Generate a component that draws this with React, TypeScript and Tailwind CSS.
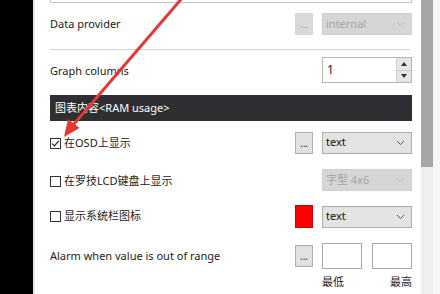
import React from 'react';

// Small building blocks for the settings panel
const DotsButton: React.FC<{ disabled?: boolean }> = ({ disabled }) => (
    <div
        className={
            'w-[18px] h-[22px] flex items-center justify-center text-[10px] leading-none border ' +
            (disabled ? 'bg-[#d9d9d9] border-[#d9d9d9] text-[#9a9a9a]' : 'bg-[#e1e1e1] border-[#adadad] text-[#222]')
        }
    >
        ...
    </div>
);

const Chevron: React.FC<{ color: string }> = ({ color }) => (
    <svg width="9" height="6" viewBox="0 0 9 6" fill="none">
        <path d="M1 1l3.5 3.5L8 1" stroke={color} strokeWidth="1" />
    </svg>
);

const Select: React.FC<{ value: string; disabled?: boolean }> = ({ value, disabled }) => (
    <div
        className={
            'w-[90px] h-[22px] flex items-center justify-between pl-[3px] pr-[6px] border ' +
            (disabled ? 'bg-[#d6d6d6] border-[#cfcfcf] text-[#a3a3a3]' : 'bg-[#e3e3e3] border-[#adadad] text-[#111]')
        }
    >
        <span>{value}</span>
        <Chevron color={disabled ? '#b5b5b5' : '#555'} />
    </div>
);

const CheckBox: React.FC<{ checked?: boolean }> = ({ checked }) => (
    <div className="w-[11px] h-[11px] border border-[#333] bg-white flex items-center justify-center">
        {checked && (
            <svg width="9" height="9" viewBox="0 0 9 9" fill="none">
                <path d="M1.2 4.6l2.2 2.2L7.8 1.8" stroke="#222" strokeWidth="1.2" />
            </svg>
        )}
    </div>
);

const App: React.FC = () => {
    return (
        <div
            className="relative w-[440px] h-[294px] overflow-hidden flex bg-white text-[11px] text-[#1b1b1b]"
            style={{ fontFamily: '"Noto Sans", "Noto Sans CJK SC", sans-serif' }}
        >
            {/* dark left edge */}
            <div className="w-[33px] bg-black" />
            <div className="w-[2px] bg-[#dde6ee]" />

            {/* panel */}
            <div className="flex-1 flex flex-col pl-[15px] pr-[9px]">
                <div className="h-[3px] border-l border-r border-b border-[#c4c4c4]" />

                {/* Data provider */}
                <div className="mt-[10px] h-[22px] flex items-center">
                    <span className="flex-1">Data provider</span>
                    <DotsButton disabled />
                    <div className="ml-[9px]">
                        <Select value="internal" disabled />
                    </div>
                </div>

                <div className="mt-[14px] mr-[2px] h-px bg-[#d2d2d2]" />

                {/* Graph columns */}
                <div className="mt-[7px] h-[26px] flex items-center">
                    <span className="flex-1 pt-[3px]">Graph columns</span>
                    <div className="w-[90px] h-[26px] flex border border-[#b4b4b4] bg-white">
                        <span className="flex-1 pl-[4px] pt-[3px] text-[12px]">1</span>
                        <div className="w-[15px] flex flex-col bg-[#e6e6e6] border-l border-[#d0d0d0]">
                            <div className="flex-1 flex items-center justify-center border-b border-[#c8c8c8]">
                                <svg width="6" height="4" viewBox="0 0 6 4"><path d="M0 4L3 0L6 4Z" fill="#333" /></svg>
                            </div>
                            <div className="flex-1 flex items-center justify-center">
                                <svg width="6" height="4" viewBox="0 0 6 4"><path d="M0 0L3 4L6 0Z" fill="#333" /></svg>
                            </div>
                        </div>
                    </div>
                </div>

                {/* section header */}
                <div className="mt-[12px] h-[26px] bg-[#2f2f33] text-white flex items-center pl-[5px]">
                    图表内容&lt;RAM usage&gt;
                </div>

                {/* OSD */}
                <div className="mt-[10px] h-[23px] flex items-center">
                    <div className="flex-1 flex items-center gap-[3px] pt-[2px]">
                        <CheckBox checked />
                        <span>在OSD上显示</span>
                    </div>
                    <DotsButton />
                    <div className="ml-[9px]">
                        <Select value="text" />
                    </div>
                </div>

                {/* Logitech LCD */}
                <div className="mt-[15px] h-[22px] flex items-center">
                    <div className="flex-1 flex items-center gap-[3px] pt-[2px]">
                        <CheckBox />
                        <span>在罗技LCD键盘上显示</span>
                    </div>
                    <Select value="字型 4x6" disabled />
                </div>

                {/* tray icon */}
                <div className="mt-[14px] h-[23px] flex items-center">
                    <div className="flex-1 flex items-center gap-[3px]">
                        <CheckBox />
                        <span>显示系统栏图标</span>
                    </div>
                    <div className="w-[18px] h-[23px] bg-[#ff0000] border border-[#c80000]" />
                    <div className="ml-[9px]">
                        <Select value="text" />
                    </div>
                </div>

                {/* alarm */}
                <div className="mt-[15px] h-[26px] flex items-center">
                    <span className="flex-1">Alarm when value is out of range</span>
                    <DotsButton />
                    <div className="ml-[9px] w-[40px] h-[26px] border border-[#a8a8a8] bg-white" />
                    <div className="ml-[10px] w-[40px] h-[26px] border border-[#a8a8a8] bg-white" />
                </div>
                <div className="mt-[5px] flex justify-end">
                    <div className="w-[90px] flex justify-between">
                        <span>最低</span>
                        <span>最高</span>
                    </div>
                </div>
            </div>

            {/* scrollbar */}
            <div className="w-[12px] flex flex-col bg-[#efefef]">
                <div className="h-[167px] bg-[#a6a6a6]" />
            </div>
            <div className="w-[7px] bg-[#f7f7f7]" />

            {/* red annotation arrow */}
            <svg className="absolute left-0 top-0 pointer-events-none" width="440" height="294" viewBox="0 0 440 294">
                <line x1="183" y1="-3" x2="74" y2="124" stroke="#e23a33" strokeWidth="3" strokeLinecap="round" />
                <polygon points="64,137 79.5,128 68,119" fill="#e23a33" />
            </svg>
        </div>
    );
};

export default App;
